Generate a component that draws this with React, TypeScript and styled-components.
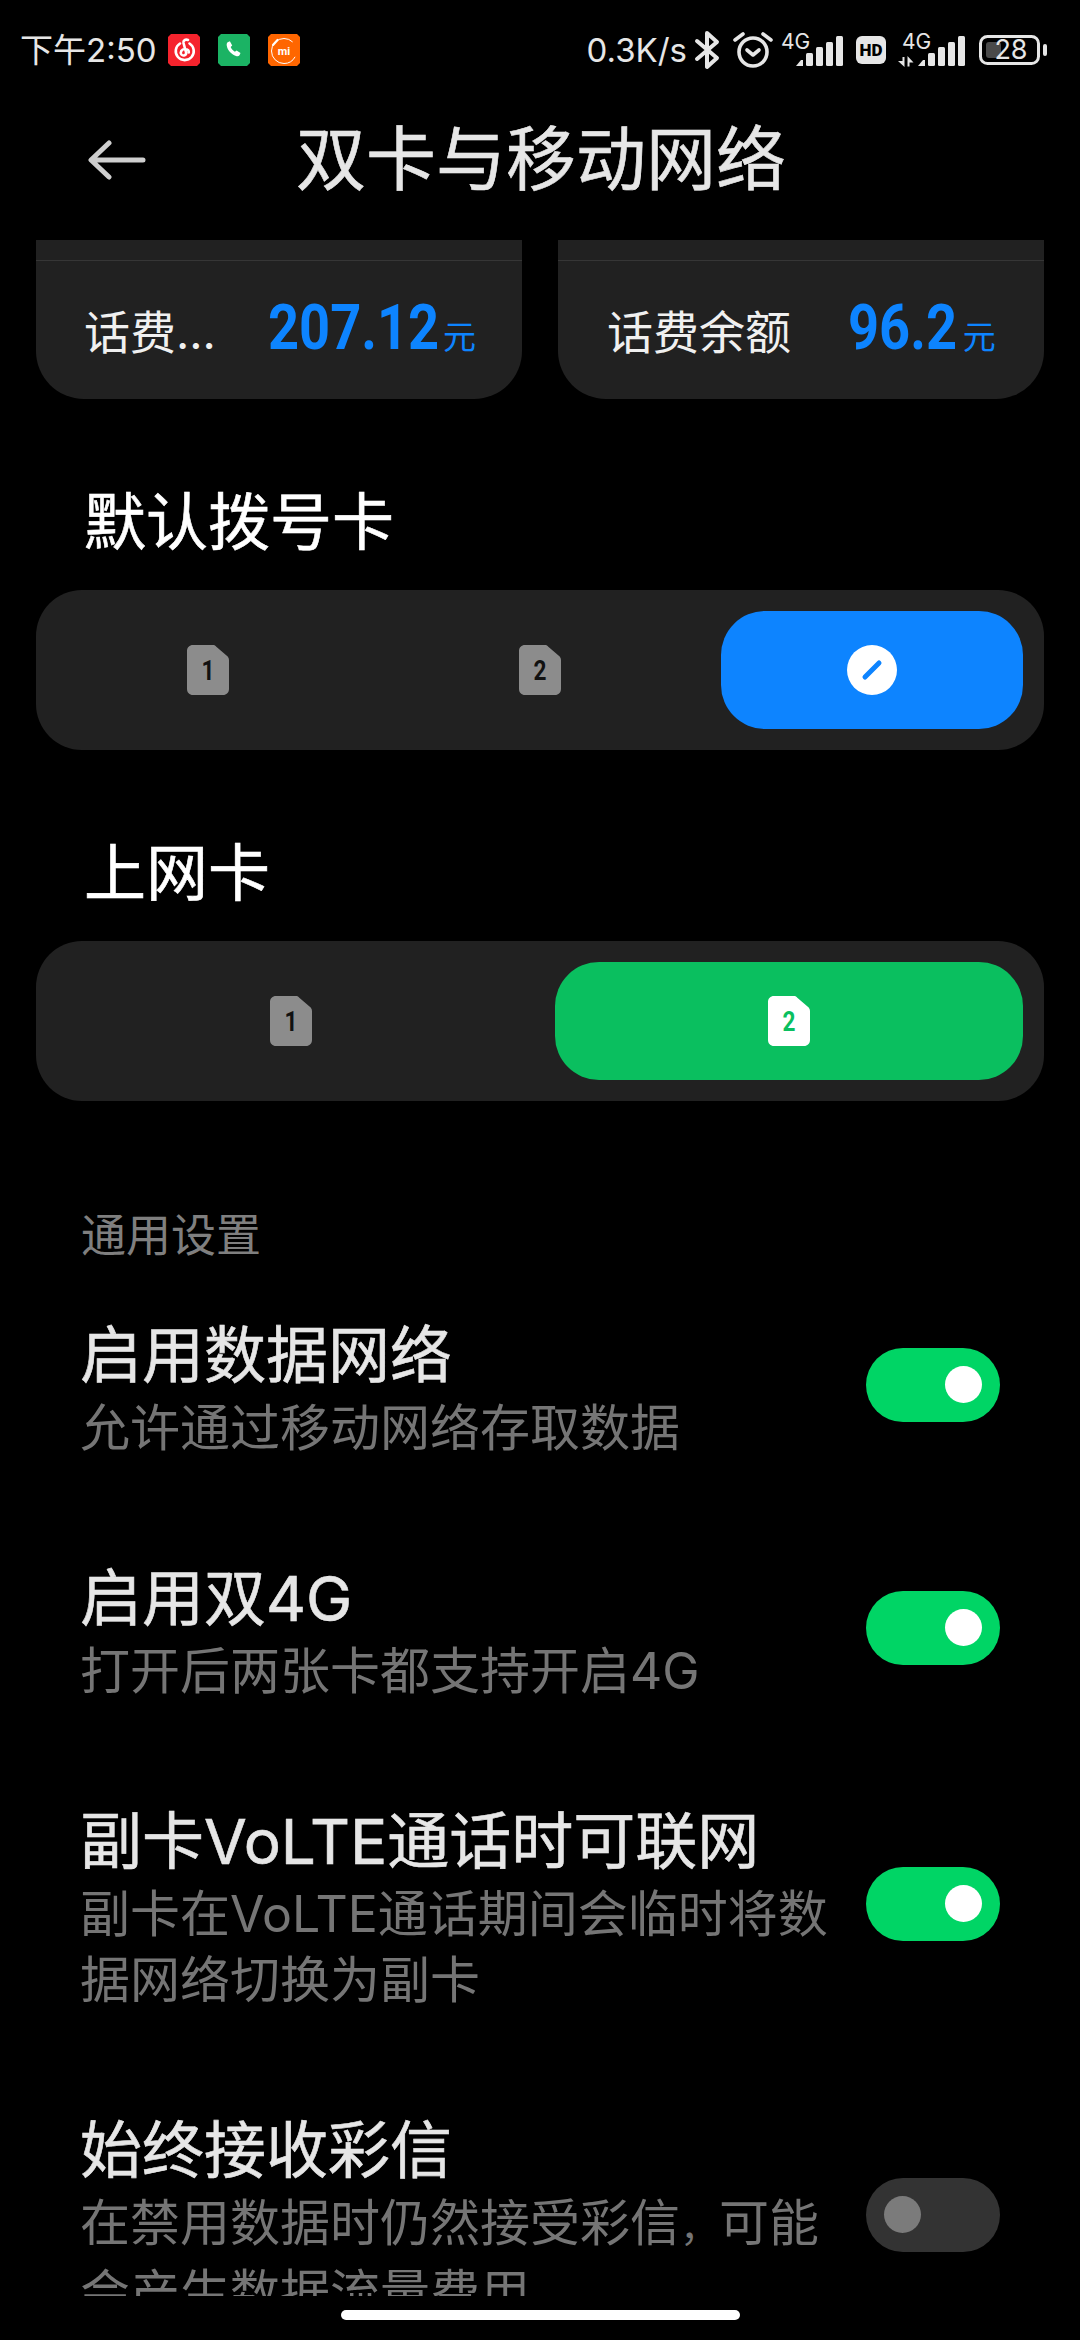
import * as React from 'react';
import styled, { createGlobalStyle } from 'styled-components';

const CJK = `Inter, "Noto Sans CJK SC", sans-serif`;

const GlobalStyle = createGlobalStyle`
  html, body {
    margin: 0;
    padding: 0;
    background: #000;
    overflow: hidden;
  }
  body {
    font-family: ${CJK};
  }
`;

const Page = styled.div`
  width: 1080px;
  height: 2340px;
  background: #000;
  color: #fff;
  display: flex;
  flex-direction: column;
  overflow: hidden;
`;

const StatusBar = styled.div`
  height: 96px;
  flex: none;
  display: flex;
  align-items: flex-start;
  justify-content: space-between;
  padding: 30px 33px 0 20px;
  box-sizing: border-box;
`;

const StatusGroup = styled.div`
  display: flex;
  align-items: center;
  height: 40px;
`;

const Clock = styled.span`
  font-size: 33px;
  line-height: 40px;
  color: #e6e6e6;
  width: 148px;
`;

const NotifIcon = styled.svg`
  display: block;
  width: 32px;
  height: 32px;
  margin-right: 18px;
`;

const Speed = styled.span`
  font-size: 33px;
  line-height: 40px;
  color: #e6e6e6;
`;

const StatusIcon = styled.svg<{ $gap: number }>`
  display: block;
  flex: none;
  margin-left: ${(p) => p.$gap}px;
  color: #e6e6e6;
  overflow: visible;
`;

const Header = styled.div`
  height: 144px;
  flex: none;
  display: flex;
  align-items: center;
  padding-left: 88px;
  box-sizing: border-box;
`;

const BackIcon = styled.svg`
  width: 58px;
  height: 40px;
  flex: none;
  margin-top: -16px;
`;

const Title = styled.h1`
  margin: -16px 0 0 150px;
  font-size: 70px;
  line-height: 90px;
  font-weight: 400;
  -webkit-text-stroke: 0.6px #e6e6e6;
  color: #e6e6e6;
`;

const Scroller = styled.div`
  flex: 1;
  min-height: 0;
  overflow: hidden;
`;

const Balances = styled.div`
  display: grid;
  grid-template-columns: 1fr 1fr;
  gap: 36px;
  padding: 0 36px;
`;

const BalanceCard = styled.div`
  height: 159px;
  background: #212121;
  border-radius: 0 0 48px 48px;
  display: flex;
  flex-direction: column;
`;

const CardRule = styled.div`
  height: 1px;
  margin-top: 20px;
  background: #363636;
  flex: none;
`;

const BalanceBody = styled.div<{ $left: number }>`
  flex: 1;
  display: flex;
  align-items: baseline;
  padding: 32px 0 0 ${(p) => p.$left}px;
`;

const BalanceLabel = styled.span<{ $width: number }>`
  font-size: 46px;
  line-height: 70px;
  color: #f0f0f0;
  width: ${(p) => p.$width}px;
  flex: none;
`;

/* the reference uses a condensed numeral face, none is installed */
const BalanceValue = styled.span<{ $pull: number }>`
  display: inline-block;
  font-family: Roboto, sans-serif;
  font-size: 63px;
  line-height: 70px;
  font-weight: 700;
  color: #0d84ff;
  transform: scaleX(0.86);
  transform-origin: left center;
  margin-right: -${(p) => p.$pull}px;
`;

const BalanceUnit = styled.span`
  font-size: 33px;
  font-weight: 400;
  color: #0d84ff;
  margin-left: 5px;
`;

const SectionTitle = styled.h2`
  margin: 84px 0 27px 84px;
  font-size: 62px;
  line-height: 80px;
  font-weight: 400;
  -webkit-text-stroke: 0.6px #fff;
  color: #fff;
`;

const SimPanel = styled.div<{ $cols: number }>`
  margin: 0 36px;
  height: 160px;
  box-sizing: border-box;
  padding: 21px;
  background: #212121;
  border-radius: 46px;
  display: grid;
  grid-template-columns: repeat(${(p) => p.$cols}, 1fr);
  gap: 30px;
`;

const SimOption = styled.div<{ $color?: string }>`
  border-radius: 44px;
  background: ${(p) => p.$color ?? 'transparent'};
  display: flex;
  align-items: center;
  justify-content: center;
`;

const SimSvg = styled.svg`
  display: block;
  width: 42px;
  height: 50px;
`;

const SimDigit = styled.text`
  font-family: Roboto, sans-serif;
  font-size: 28px;
  font-weight: 700;
  text-anchor: middle;
`;

const PenBadge = styled.svg`
  display: block;
  width: 50px;
  height: 50px;
`;

const GroupLabel = styled.div`
  margin: 105px 0 1px 81px;
  font-size: 45px;
  line-height: 60px;
  color: #7f7f7f;
`;

const Row = styled.div`
  display: flex;
  align-items: center;
  justify-content: space-between;
  padding: 49px 80px 49px 80px;
`;

const RowText = styled.div`
  width: 750px;
`;

const RowTitle = styled.div`
  font-size: 62px;
  line-height: 75px;
  font-weight: 400;
  -webkit-text-stroke: 0.6px #e6e6e6;
  color: #e6e6e6;
  position: relative;
  top: 2px;
`;

const RowSub = styled.div`
  margin-top: 4px;
  font-size: 50px;
  line-height: 66px;
  color: #757575;
`;

const TightComma = styled.span`
  font-size: 39px;
`;

const Toggle = styled.div<{ $on: boolean }>`
  width: 134px;
  height: 74px;
  flex: none;
  box-sizing: border-box;
  border-radius: 37px;
  padding: 0 18px;
  margin-bottom: 8px;
  display: flex;
  align-items: center;
  justify-content: ${(p) => (p.$on ? 'flex-end' : 'flex-start')};
  background: ${(p) => (p.$on ? '#00d565' : '#333333')};
  &::after {
    content: '';
    width: 37px;
    height: 37px;
    border-radius: 50%;
    background: ${(p) => (p.$on ? '#ffffff' : '#7b7b7b')};
  }
`;

const HomeArea = styled.div`
  height: 44px;
  flex: none;
  display: flex;
  justify-content: center;
  padding-top: 14px;
  box-sizing: border-box;
`;

const HomeBar = styled.div`
  width: 399px;
  height: 10px;
  border-radius: 5px;
  background: #fff;
`;

const SmallNet = styled.text`
  font-size: 21px;
  fill: currentColor;
`;

const SignalBars = ({ x }: { x: number }) => (
  <g fill="currentColor">
    <path d={`M${x} 34l5-6h2v6h-7z`} />
    <rect x={x + 10} y="21" width="7" height="13" rx="1.5" />
    <rect x={x + 20} y="15" width="7" height="19" rx="1.5" />
    <rect x={x + 30} y="10" width="7" height="24" rx="1.5" />
    <rect x={x + 40} y="4" width="7" height="30" rx="1.5" />
  </g>
);

const Sim = ({ n, body, digit }: { n: string; body: string; digit: string }) => (
  <SimSvg viewBox="0 0 42 50">
    <path
      d="M6 0h20c1.500 0 2.500.6 3.300 1.800l11.400 9.700c.9 1.200 1.300 2.400 1.300 3.800V44c0 3.500-2.500 6-6 6H6c-3.500 0-6-2.500-6-6V6c0-3.500 2.500-6 6-6z"
      fill={body}
    />
    <SimDigit x="21" y="35" fill={digit} textLength={13} lengthAdjust="spacingAndGlyphs">{n}</SimDigit>
  </SimSvg>
);

const SETTINGS = [
  { title: '启用数据网络', sub: '允许通过移动网络存取数据', on: true },
  { title: '启用双4G', sub: '打开后两张卡都支持开启4G', on: true },
  { title: '副卡VoLTE通话时可联网', sub: '副卡在VoLTE通话期间会临时将数据网络切换为副卡', on: true },
  {
    title: '始终接收彩信',
    sub: <>在禁用数据时仍然接受彩信<TightComma>，</TightComma>可能会产生数据流量费用</>,
    on: false,
  },
];

const OCTAGON = 'M3 0h26l3 3v26l-3 3H3l-3-3V3z';

export default function App() {
  return (
    <Page>
      <GlobalStyle />
      <StatusBar>
        <StatusGroup>
          <Clock>下午2:50</Clock>
          <NotifIcon viewBox="0 0 32 32">
            <path d={OCTAGON} fill="#f5232d" />
            <g fill="none" stroke="#fff" strokeWidth="2.600" strokeLinecap="round">
              <path d="M12 9.500a9 9 0 1 0 9.500 0" />
              <path d="M20 6c-2.500-1.200-5 .5-4.500 3l2.600 9.500c.6 2.600-3 4-4.700 2-1.600-2 0-5.500 3.600-5.500 3 0 4 2 3.800 3.500" />
            </g>
          </NotifIcon>
          <NotifIcon viewBox="0 0 32 32">
            <path d={OCTAGON} fill="#1bb364" />
            <path
              d="M9.600 8.200l2.300-1 2.300 4.300-1.500 1.600c.8 2 2.400 3.700 4.200 4.600l1.700-1.300 3.900 2.600-1 2.200c-.6 1-1.700 1.300-2.800 1-5.500-1.600-9.200-5.700-10-10.900-.1-1.300.2-2.400 1-3.100z"
              fill="#fff"
            />
          </NotifIcon>
          <NotifIcon viewBox="0 0 32 32">
            <path d={OCTAGON} fill="#ff6600" />
            <circle cx="16" cy="17" r="12.500" fill="none" stroke="#fff" strokeWidth="1" strokeDasharray="62 18" strokeDashoffset="-6" />
            <path d="M5 11l4.500-5" stroke="#fff" strokeWidth="2.200" strokeLinecap="round" />
            <text x="16" y="21" fontSize="11" fontWeight="700" fill="#fff" textAnchor="middle" fontFamily="Roboto, sans-serif">mi</text>
          </NotifIcon>
        </StatusGroup>
        <StatusGroup>
          <Speed>0.3K/s</Speed>
          <StatusIcon $gap={8} width="24" height="40" viewBox="0 0 24 40">
            <path d="M2 11l20 17-10 9V3l10 9L2 29" fill="none" stroke="currentColor" strokeWidth="4" strokeLinecap="round" strokeLinejoin="round" />
          </StatusIcon>
          <StatusIcon $gap={14} width="40" height="38" viewBox="0 0 40 38">
            <g fill="none" stroke="currentColor" strokeLinecap="round">
              <circle cx="20" cy="21" r="14" strokeWidth="3.600" />
              <path d="M14 19l6 5 6-5" strokeWidth="3.600" strokeLinejoin="round" />
              <path d="M2 9l8-6M38 9l-8-6" strokeWidth="3.600" />
            </g>
          </StatusIcon>
          <StatusIcon $gap={8} width="62" height="36" viewBox="0 0 62 36">
            <SmallNet x="0" y="17">4G</SmallNet>
            <SignalBars x={15} />
          </StatusIcon>
          <StatusIcon $gap={13} width="30" height="28" viewBox="0 0 30 28">
            <rect width="30" height="28" rx="6" fill="currentColor" />
            <text x="15" y="20" fontSize="17" fontWeight="900" fill="#000" textAnchor="middle" fontFamily="Roboto, sans-serif">HD</text>
          </StatusIcon>
          <StatusIcon $gap={12} width="67" height="36" viewBox="0 0 67 36">
            <SmallNet x="4" y="17">4G</SmallNet>
            <g fill="currentColor">
              <path d="M0 29h4.500v-4h2v10z" />
              <path d="M9.500 24l6 6.500h-4v4h-2z" />
            </g>
            <SignalBars x={20} />
          </StatusIcon>
          <StatusIcon $gap={14} width="68" height="30" viewBox="0 0 68 30">
            <rect x="1.500" y="1.500" width="58" height="27" rx="7" fill="none" stroke="currentColor" strokeWidth="3" />
            <rect x="7" y="7" width="15" height="16" rx="3" fill="#4a4a4a" />
            <text x="32" y="24" fontSize="27" fill="currentColor" textAnchor="middle" fontFamily="Inter, sans-serif">28</text>
            <rect x="64" y="9" width="4" height="12" rx="2" fill="currentColor" />
          </StatusIcon>
        </StatusGroup>
      </StatusBar>

      <Header>
        <BackIcon viewBox="0 0 58 40">
          <path d="M21 3L3 20l18 17M4 20h51" fill="none" stroke="#cfcfcf" strokeWidth="5" strokeLinecap="round" strokeLinejoin="round" />
        </BackIcon>
        <Title>双卡与移动网络</Title>
      </Header>

      <Scroller>
        <Balances>
          <BalanceCard>
            <CardRule />
            <BalanceBody $left={48}>
              <BalanceLabel $width={184}>话费...</BalanceLabel>
              <BalanceValue $pull={29}>207.12</BalanceValue>
              <BalanceUnit>元</BalanceUnit>
            </BalanceBody>
          </BalanceCard>
          <BalanceCard>
            <CardRule />
            <BalanceBody $left={49}>
              <BalanceLabel $width={241}>话费余额</BalanceLabel>
              <BalanceValue $pull={17}>96.2</BalanceValue>
              <BalanceUnit>元</BalanceUnit>
            </BalanceBody>
          </BalanceCard>
        </Balances>

        <SectionTitle>默认拨号卡</SectionTitle>
        <SimPanel $cols={3}>
          <SimOption><Sim n="1" body="#8c8c8c" digit="#111" /></SimOption>
          <SimOption><Sim n="2" body="#8c8c8c" digit="#111" /></SimOption>
          <SimOption $color="#0d84ff">
            <PenBadge viewBox="0 0 50 50">
              <circle cx="25" cy="25" r="25" fill="#fff" />
              <path d="M18 32l14-14" stroke="#0d84ff" strokeWidth="5" strokeLinecap="round" />
            </PenBadge>
          </SimOption>
        </SimPanel>

        <SectionTitle>上网卡</SectionTitle>
        <SimPanel $cols={2}>
          <SimOption><Sim n="1" body="#8c8c8c" digit="#111" /></SimOption>
          <SimOption $color="#0abf5f"><Sim n="2" body="#fff" digit="#0abf5f" /></SimOption>
        </SimPanel>

        <GroupLabel>通用设置</GroupLabel>
        {SETTINGS.map((item) => (
          <Row key={item.title}>
            <RowText>
              <RowTitle>{item.title}</RowTitle>
              <RowSub>{item.sub}</RowSub>
            </RowText>
            <Toggle $on={item.on} />
          </Row>
        ))}
      </Scroller>

      <HomeArea>
        <HomeBar />
      </HomeArea>
    </Page>
  );
}
